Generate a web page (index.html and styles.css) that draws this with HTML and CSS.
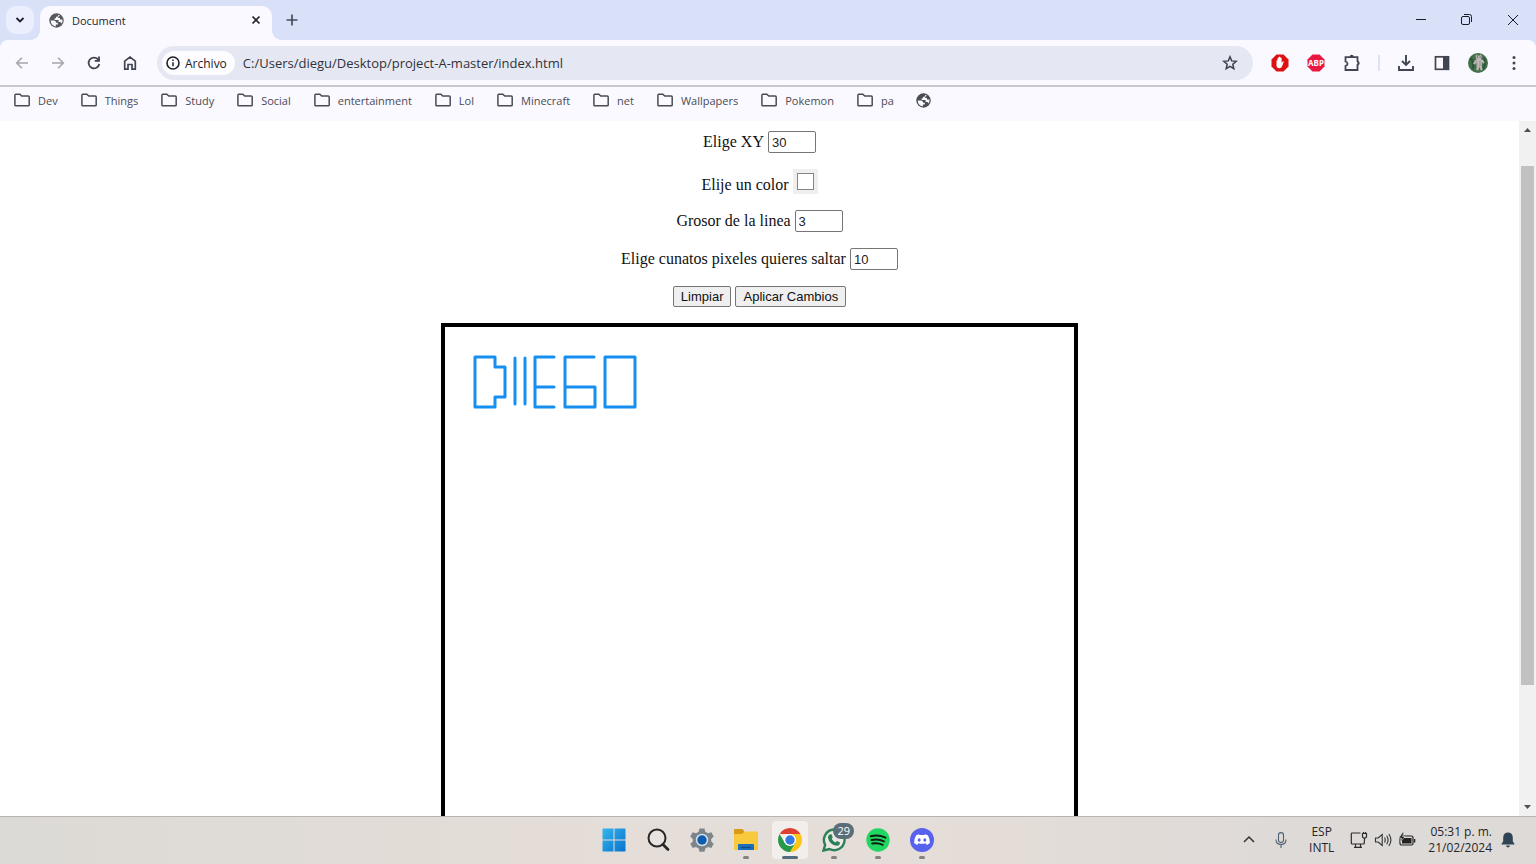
FILE: index.html
```html
<!DOCTYPE html>
<html lang="es">
<head>
<meta charset="utf-8">
<meta name="viewport" content="width=device-width, initial-scale=1">
<title>Document</title>
<link rel="stylesheet" href="styles.css">
</head>
<body>
<svg class="defs" aria-hidden="true">
  <symbol id="globe" viewBox="0 0 16 16"><circle cx="8" cy="8" r="7.700" fill="currentColor"/><path d="M9.500 1.800q.8 1.200-.3 2.200H7.500v1.700H6v1.800h4.200v2.200h1.700q1 .2 1.300 1.500 1.600-1.800 1.200-4.200h-2.700V5.300H9.800V4l2-1zM1.800 8h3.800q1.800.4 2 2.500h1.800v1.800H7.300v2q-5.300-.8-5.500-6.300z" fill="#faf9ff"/></symbol>
  <symbol id="folder" viewBox="0 0 18 16"><path d="M1.900 13V3.200q0-.9.9-.9h4.100l1.800 1.800h6.500q1 0 1 1v7.800q0 .9-1 .9H2.800q-.9 0-.9-.8z" fill="none" stroke="currentColor" stroke-width="1.5"/></symbol>
</svg>

<header class="tabstrip">
  <button class="tab-search" aria-label="Buscar pestañas"><svg width="10" height="10" viewBox="0 0 10 10"><path d="m1.500 3 3.500 3.500L8.500 3" fill="none" stroke="currentColor" stroke-width="1.8"/></svg></button>
  <div class="tab">
    <svg class="tab-icon" width="15" height="15"><use href="#globe"/></svg>
    <span class="tab-title">Document</span>
    <button class="bare" aria-label="Cerrar pestaña"><svg width="16" height="16" viewBox="0 0 16 16"><path d="m4.500 4.500 7 7m0-7-7 7" stroke="currentColor" stroke-width="1.7"/></svg></button>
  </div>
  <button class="bare new-tab" aria-label="Nueva pestaña"><svg width="16" height="16" viewBox="0 0 16 16"><path d="M8 2.500v11M2.500 8h11" stroke="#474c5c" stroke-width="1.7"/></svg></button>
  <div class="window-controls">
    <button class="bare" aria-label="Minimizar"><svg width="12" height="12" viewBox="0 0 12 12"><path d="M1 5.500h10" stroke="currentColor"/></svg></button>
    <button class="bare" aria-label="Restaurar"><svg width="12" height="12" viewBox="0 0 12 12"><rect x=".5" y="2.500" width="8" height="8" rx="1.500" fill="none" stroke="currentColor"/><path d="M3 .5h5.500q2 0 2 2V8" fill="none" stroke="currentColor"/></svg></button>
    <button class="bare" aria-label="Cerrar"><svg width="12" height="12" viewBox="0 0 12 12"><path d="m1 1 10 10M11 1 1 11" stroke="currentColor"/></svg></button>
  </div>
</header>

<nav class="toolbar" aria-label="Navegación">
  <button class="tool dim" aria-label="Atrás"><svg width="16" height="16" viewBox="0 0 16 16"><path d="M14 8H3m5-5.300L2.700 8 8 13.300" fill="none" stroke="currentColor" stroke-width="1.6"/></svg></button>
  <button class="tool dim" aria-label="Adelante"><svg width="16" height="16" viewBox="0 0 16 16"><path d="M2 8h11M8 2.700 13.300 8 8 13.300" fill="none" stroke="currentColor" stroke-width="1.6"/></svg></button>
  <button class="tool" aria-label="Recargar"><svg width="16" height="16" viewBox="0 0 16 16"><path d="M13.300 9A5.400 5.400 0 1 1 12 4.300L13.200 5.500" fill="none" stroke="currentColor" stroke-width="1.8"/><path d="M13.900 1.600v5.200H8.700V5h3.400V1.600z" fill="currentColor"/></svg></button>
  <button class="tool" aria-label="Inicio"><svg width="16" height="16" viewBox="0 0 16 16"><path d="M2.700 6.200 8 2l5.300 4.200v8H10V9.500H6v4.700H2.700z" fill="none" stroke="currentColor" stroke-width="1.7"/></svg></button>
  <div class="omnibox">
    <button class="site-info"><svg width="14" height="14" viewBox="0 0 14 14"><circle cx="7" cy="7" r="6" fill="none" stroke="currentColor" stroke-width="1.6"/><path d="M7 6.300v4M7 3.500v1.500" stroke="currentColor" stroke-width="1.5"/></svg>Archivo</button>
    <input class="url" type="text" aria-label="Dirección" value="C:/Users/diegu/Desktop/project-A-master/index.html">
    <button class="bare" aria-label="Añadir a marcadores"><svg width="16" height="16" viewBox="0 0 16 16"><path d="m8 1.800 1.700 4.100 4.500.4-3.400 2.900 1 4.400L8 11.300l-3.800 2.300 1-4.400-3.400-2.900 4.500-.4z" fill="none" stroke="#3c404d" stroke-width="1.5"/></svg></button>
  </div>
  <button class="tool" aria-label="AdBlock"><svg width="18" height="18" viewBox="0 0 18 18"><path d="M5.500.5h7l5 5v7l-5 5h-7l-5-5v-7z" fill="#dc1212"/><path d="M5.500 6.500q.7-.7 1.100 0V4q.6-.9 1.300 0V3q.7-.9 1.400 0v1q.7-.9 1.300 0v5l1-1.500q.8-.5 1.200.3L11 12.500q-.7 1.800-2.500 1.800-3 0-3-3z" fill="#fff"/></svg></button>
  <button class="tool" aria-label="Adblock Plus"><svg width="18" height="18" viewBox="0 0 18 18"><path d="M5.500.5h7l5 5v7l-5 5h-7l-5-5v-7z" fill="#e81840"/><text class="abp" x="9" y="12" text-anchor="middle">ABP</text></svg></button>
  <button class="tool" aria-label="Extensiones"><svg width="18" height="18" viewBox="0 0 18 18"><path d="M2.500 3.200h12v4a1.700 2 0 0 1 0 3.600v5.200h-12v-4q2-.6 2-2.200t-2-2.300z" fill="none" stroke="currentColor" stroke-width="1.8"/><path d="M6.700 3a2 2.200 0 0 1 4 0zM14.800 7a2.200 2.200 0 0 1 0 4.300z" fill="currentColor"/></svg></button>
  <span class="divider"></span>
  <button class="tool" aria-label="Descargas"><svg width="18" height="18" viewBox="0 0 18 18"><path d="M9 1v9.500M5 7l4 4 4-4M2 12v4h14v-4" fill="none" stroke="currentColor" stroke-width="1.9"/></svg></button>
  <button class="tool" aria-label="Panel lateral"><svg width="18" height="18" viewBox="0 0 18 18"><rect x="2.500" y="2.800" width="13" height="12.500" fill="none" stroke="currentColor" stroke-width="1.7"/><path d="M10 3h5.500v12H10z" fill="currentColor"/></svg></button>
  <button class="tool" aria-label="Perfil"><svg width="20" height="20" viewBox="0 0 20 20"><circle cx="10" cy="10" r="10" fill="#42704a"/><path d="M2.500 5Q6 9 5 16M16 5q2 6-1 11" fill="none" stroke="#2d5537" stroke-width="2"/><path d="m8 1 1 1.500h3L13 1l.8 3-.8 2.500 2.200.6 1.500 3-1.700.5-1-1.500-.2 4 .8 3.900-2 .5-1-4-1.300 4-2-.5.4-4-.6-3-1.500 1.500-1.600-.8L7 7.200l1.600-.7L7.500 4z" fill="#bdb8b6"/><circle cx="9.400" cy="4" r=".6" fill="#222"/><circle cx="12.100" cy="4" r=".6" fill="#222"/><path d="m8 8 1 5m3-5v5" stroke="#8b8983" stroke-width=".7"/></svg></button>
  <button class="tool" aria-label="Menú"><svg width="16" height="16" viewBox="0 0 16 16" fill="currentColor"><circle cx="8" cy="2.500" r="1.500"/><circle cx="8" cy="8" r="1.500"/><circle cx="8" cy="13.500" r="1.500"/></svg></button>
</nav>

<nav class="bookmarks" aria-label="Marcadores">
  <button><svg width="18" height="16"><use href="#folder"/></svg>Dev</button>
  <button><svg width="18" height="16"><use href="#folder"/></svg>Things</button>
  <button><svg width="18" height="16"><use href="#folder"/></svg>Study</button>
  <button><svg width="18" height="16"><use href="#folder"/></svg>Social</button>
  <button><svg width="18" height="16"><use href="#folder"/></svg>entertainment</button>
  <button><svg width="18" height="16"><use href="#folder"/></svg>Lol</button>
  <button><svg width="18" height="16"><use href="#folder"/></svg>Minecraft</button>
  <button><svg width="18" height="16"><use href="#folder"/></svg>net</button>
  <button><svg width="18" height="16"><use href="#folder"/></svg>Wallpapers</button>
  <button><svg width="18" height="16"><use href="#folder"/></svg>Pokemon</button>
  <button><svg width="18" height="16"><use href="#folder"/></svg>pa</button>
  <button aria-label="Página"><svg width="15" height="15"><use href="#globe"/></svg></button>
</nav>

<div class="viewport">
  <main class="page">
    <p><label for="xy">Elige XY</label> <input class="number" id="xy" type="number" value="30"></p>
    <p class="color-row"><label for="color">Elije un color</label> <input class="color" id="color" type="color" value="#ffffff"></p>
    <p><label for="grosor">Grosor de la linea</label> <input class="number" id="grosor" type="number" value="3"></p>
    <p><label for="salto">Elige cunatos pixeles quieres saltar</label> <input class="number" id="salto" type="number" value="10"></p>
    <p><button class="action">Limpiar</button> <button class="action">Aplicar Cambios</button></p>
    <svg class="canvas" width="629" height="629" role="img" aria-label="Dibujo">
      <g fill="none" stroke="#168ff0" stroke-width="3" stroke-linejoin="round" stroke-linecap="round">
        <path d="M30 30H50V40H60V70H50V80H30z"/>
        <path d="M70 31V77M80 31V77"/>
        <path d="M109 30H90V80H109M90 60H109"/>
        <path d="M149 30H120V80H150V60H120"/>
        <path d="M160 30H190V80H160z"/>
      </g>
    </svg>
  </main>
  <div class="scrollbar" aria-hidden="true">
    <svg width="17" height="17" viewBox="0 0 17 17"><path d="m5 11 3.500-4L12 11z" fill="#505050"/></svg>
    <div class="track"><div class="thumb"></div></div>
    <svg width="17" height="17" viewBox="0 0 17 17"><path d="m5 6 3.500 4L12 6z" fill="#505050"/></svg>
  </div>
</div>

<footer class="taskbar">
  <div class="apps">
    <button class="app" aria-label="Inicio"><svg width="24" height="24" viewBox="0 0 24 24"><defs><linearGradient id="win" x2="1" y2="1"><stop stop-color="#35b6ee"/><stop offset="1" stop-color="#0872cc"/></linearGradient></defs><path d="M1 .5h10.500V11.500H.5V1zM12.500.5H23l.5.5v10.500h-11zM.5 12.500h11v11H1l-.5-.5zM12.500 12.500h11V23l-.5.5H12.500z" fill="url(#win)"/></svg></button>
    <button class="app" aria-label="Buscar"><svg width="24" height="24" viewBox="0 0 24 24"><circle cx="11" cy="10" r="8.500" fill="#e9e3df" stroke="#282727" stroke-width="2"/><path d="m17 16.500 5 5" stroke="#282727" stroke-width="2.800" stroke-linecap="round"/></svg></button>
    <button class="app" aria-label="Configuración"><svg width="24" height="24" viewBox="0 0 24 24"><path d="M9.500.5h5l.8 3.300 2.700 1.500 3.300-1 2.400 4.200L21.200 11v2.500l2.500 2.200-2.400 4.200-3.300-1-2.700 1.600-.8 3.200h-5l-.8-3.200L6 18.900l-3.300 1L.3 15.700l2.500-2.200V11L.3 8.500l2.400-4.200 3.300 1 2.700-1.500z" fill="#7c858c"/><circle cx="12" cy="12" r="6.200" fill="#d9e1e8"/><circle cx="12" cy="12" r="4.700" fill="#0c5caf"/></svg></button>
    <button class="app open" aria-label="Explorador de archivos"><svg width="24" height="24" viewBox="0 0 24 24"><path d="M0 2q0-1 1-1h7.500l2 2.500L8 7H0z" fill="#d99a17"/><path d="M0 6h8l3-2.500h12q1 0 1 1V22H0z" fill="#f8c93d"/><path d="M4 22v-5q0-1 1-1h14q1 0 1 1v5z" fill="#1a70bf"/><path d="M7 19.500h10" stroke="#114a84" stroke-width="1.300"/></svg></button>
    <button class="app open active" aria-label="Google Chrome"><svg width="24" height="24" viewBox="0 0 24 24"><path d="M1.610 6A12 12 0 0 1 22.390 6H12z" fill="#df4032"/><path d="M22.390 6A12 12 0 0 1 12 24l5.200-9L12 6z" fill="#fbc518"/><path d="M12 24A12 12 0 0 1 1.610 6l5.190 9 10.400 0z" fill="#279847"/><circle cx="12" cy="12" r="6" fill="#fff"/><circle cx="12" cy="12" r="4.700" fill="#3479e1"/></svg></button>
    <button class="app open" aria-label="WhatsApp, 29 notificaciones"><svg width="24" height="24" viewBox="0 0 24 24"><path d="m1.500 22.500 1.700-5.700A10.300 10.300 0 1 1 7.500 21z" fill="#ece8e4" stroke="#2b8056" stroke-width="2.400"/><path d="M7.700 6.400 9.300 6l1.500 3.200-1.100 1.600q1.200 2.500 3.700 3.600l1.600-1.300 3 1.500q-.3 3.400-3.300 3.200-7.300-.9-8.800-8.300 0-2 1.800-3.100z" fill="#2b8056"/></svg><span class="badge">29</span></button>
    <button class="app open" aria-label="Spotify"><svg width="24" height="24" viewBox="0 0 24 24"><circle cx="12" cy="12" r="11.700" fill="#20d760"/><path d="M4.800 8.200q7.700-2 14.700 1.400M5.500 12q6.700-1.600 12.500 1.300M6.200 15.600q5.700-1.200 10.500 1.200" fill="none" stroke="#111b14" stroke-width="2" stroke-linecap="round"/></svg></button>
    <button class="app open" aria-label="Discord"><svg width="24" height="24" viewBox="0 0 24 24"><circle cx="12" cy="12" r="12" fill="#5661ee"/><path d="m8.500 6.200 1.200.9q2.300-.4 4.600 0l1.200-.9 2.500 1.200q2 3.500 1.900 7.500l-3 2-1.300-1.700q-3.600 1-7.200 0l-1.300 1.700-3-2q-.1-4 1.900-7.500z" fill="#fff"/><ellipse cx="9.200" cy="12" rx="1.500" ry="1.700" fill="#5661ee"/><ellipse cx="14.800" cy="12" rx="1.500" ry="1.700" fill="#5661ee"/></svg></button>
  </div>
  <div class="tray">
    <button class="bare" aria-label="Iconos ocultos"><svg width="16" height="16" viewBox="0 0 16 16"><path d="m3 10 5-5 5 5" fill="none" stroke="#333" stroke-width="1.500"/></svg></button>
    <button class="bare" aria-label="Micrófono"><svg width="16" height="16" viewBox="0 0 16 16"><rect x="5.500" y=".6" width="5" height="10" rx="2.500" fill="none" stroke="#4f6070" stroke-width="1.100"/><path d="M3 7.500q0 5 5 5t5-5M8 12.500V16" fill="none" stroke="#4f6070" stroke-width="1.100"/></svg></button>
    <button class="bare lang"><span>ESP</span><span>INTL</span></button>
    <button class="bare status" aria-label="Red, volumen y batería">
      <svg width="18" height="18" viewBox="0 0 18 18" fill="none" stroke="#2c2c2c" stroke-width="1.200"><path d="M10.500 2H2.300q-1 0-1 1v9q0 1 1 1h11q1 0 1-1V9.500M5.500 13v3M10.500 13v3M4 16.300h8M14.500 9.500V7"/><path d="M12.500 2.500h4V6l-1 1h-2l-1-1zM13.500 1v1.500M15.500 1v1.500"/></svg>
      <svg width="18" height="18" viewBox="0 0 18 18" fill="none" stroke="#333" stroke-width="1.100"><path d="M1.500 7v4h2.700l4 3.500v-11L4.200 7zM10.500 6.500q1.500 2.500 0 5M12.700 4.700q2.700 4.300 0 8.600M14.900 3q4 6 0 12"/></svg>
      <svg width="18" height="18" viewBox="0 0 18 18"><rect x="2" y="5" width="13" height="9" rx="1.500" fill="none" stroke="#222" stroke-width="1.200"/><path d="M4 7h9.500v5.500H4zM16 8h1.300v3.500H16z" fill="#222"/><path d="M4.500 1.500 1 7.200h2.500L2.500 11 7 5.500H4.500l1.500-4z" fill="#222" stroke="#dedad8" stroke-width=".6"/></svg>
    </button>
    <button class="bare clock"><span>05:31 p. m.</span><span>21/02/2024</span></button>
    <button class="bare" aria-label="Notificaciones"><svg width="16" height="16" viewBox="0 0 16 16"><path d="M8 .5q4.500 0 4.800 5v3.700l1.700 2.800v.5h-13V12l1.700-2.800V5.500Q3.500.500 8 .5zM6 13.500h4q-.5 2-2 2t-2-2z" fill="#2f4354"/></svg></button>
  </div>
</footer>
</body>
</html>
```

FILE: styles.css
```css
* { box-sizing: border-box; }

body {
  margin: 0;
  height: 100vh;
  display: flex;
  flex-direction: column;
  overflow: hidden;
  background: #fff;
  font-family: "Open Sans", "Noto Sans", sans-serif;
  font-size: 12px;
  color: #3b3d45;
}

button { font: inherit; color: inherit; }
svg { display: block; flex: none; }
.defs { position: absolute; width: 0; height: 0; }

.bare, .tool, .app, .bookmarks button {
  display: flex;
  align-items: center;
  justify-content: center;
  padding: 0;
  border: 0;
  background: none;
}

/* Tab strip; it extends 8px behind the toolbar's rounded corners */
.tabstrip {
  display: flex;
  align-items: center;
  flex: none;
  height: 48px;
  margin-bottom: -8px;
  padding: 0 0 8px 6px;
  background: #d9e1f9;
}
.tab-search {
  display: grid;
  place-items: center;
  width: 28px;
  height: 28px;
  padding: 0;
  border: 0;
  border-radius: 10px;
  background: #ebeffd;
  color: #1f1f27;
}
.tab {
  position: relative;
  display: flex;
  align-items: center;
  align-self: flex-end;
  width: 232px;
  height: 34px;
  margin-left: 6px;
  padding: 0 8px 6px 9px;
  border-radius: 10px 10px 0 0;
  background: #faf9ff;
  color: #24252b;
}
.tab::before, .tab::after {
  content: "";
  position: absolute;
  bottom: 0;
  width: 10px;
  height: 10px;
}
.tab::before { right: 100%; background: radial-gradient(circle at 0 0, transparent 10px, #faf9ff 10px); }
.tab::after { left: 100%; background: radial-gradient(circle at 100% 0, transparent 10px, #faf9ff 10px); }
.tab-icon { color: #55585f; }
.tab-title { flex: 1; margin-left: 8px; font-size: 11px; }
.new-tab { width: 40px; height: 40px; }
.window-controls { display: flex; margin-left: auto; color: #1c1c24; }
.window-controls .bare { width: 46px; height: 40px; }

/* Toolbar */
.toolbar {
  position: relative;
  display: flex;
  align-items: center;
  flex: none;
  height: 47px;
  padding: 1px 4px 0;
  border-bottom: 2px solid #c6c7cf;
  background: #faf9ff;
  border-radius: 8px 8px 0 0;
}
.tool { flex: none; width: 36px; height: 36px; color: #414552; }
.dim { color: #a5a6ae; }
.omnibox {
  display: flex;
  align-items: center;
  flex: 1;
  height: 34px;
  margin: 0 9px;
  padding: 0 15px 0 5px;
  border-radius: 17px;
  background: #e5e8f3;
}
.site-info {
  display: flex;
  align-items: center;
  gap: 5px;
  height: 24px;
  padding: 0 8px 0 4px;
  border: 0;
  border-radius: 12px;
  background: #fdfcff;
  color: #1f2025;
  font-weight: 500;
}
.url {
  flex: 1;
  min-width: 0;
  padding: 0;
  margin-left: 8px;
  border: 0;
  outline: 0;
  background: none;
  color: #303239;
  font-family: inherit;
  font-size: 13px;
}
.abp { font: bold 8px "Noto Sans", sans-serif; fill: #fff; }
.divider { flex: none; width: 2px; height: 16px; margin: 0 8px; background: #dde2f4; }

/* Bookmarks */
.bookmarks {
  display: flex;
  align-items: center;
  flex: none;
  gap: 22px;
  height: 34px;
  padding: 0 13px 8px;
  background: #faf9ff;
  color: #4a4c54;
  font-size: 11px;
}
.bookmarks button { gap: 7px; }

/* Page area */
.viewport { display: flex; flex: 1; min-height: 0; }
.page {
  display: flex;
  flex-direction: column;
  align-items: center;
  flex: 1;
  gap: 16px;
  min-width: 0;
  padding-top: 10px;
  overflow: hidden;
  color: #111;
  font-family: "Liberation Serif", "Times New Roman", serif;
  font-size: 16px;
}
.page p { display: flex; flex: none; align-items: center; gap: 4px; margin: 0; }
.page .color-row { align-items: flex-end; }
.number {
  appearance: textfield;
  width: 48px;
  height: 22px;
  padding: 1px 3px;
  border: 1px solid #767676;
  border-radius: 2px;
  background: #fff;
  color: #222;
  font: 13px "Liberation Sans", Arial, sans-serif;
}
.number::-webkit-inner-spin-button { display: none; }
.color {
  appearance: none;
  width: 25px;
  height: 25px;
  padding: 0;
  border: 0;
  background: #efefef;
}
.color::-webkit-color-swatch-wrapper { padding: 4px; }
.color::-webkit-color-swatch { border: 1px solid #858585; border-radius: 0; }
.action {
  height: 21px;
  padding: 0 7px;
  border: 1px solid #767676;
  border-radius: 2px;
  background: #efefef;
  color: #111;
  font: 13px "Liberation Sans", Arial, sans-serif;
}
.canvas { box-sizing: content-box; border: 4px solid #000; }

.scrollbar { display: flex; flex-direction: column; flex: none; width: 17px; background: #f1f1f1; }
.track { flex: 1; padding: 28px 2px 0; }
.thumb { height: 82%; background: #c1c1c1; }

/* Taskbar */
.taskbar {
  display: grid;
  grid-template-columns: 1fr auto 1fr;
  align-items: start;
  flex: none;
  height: 48px;
  border-top: 1px solid #b9b4b1;
  background: linear-gradient(90deg, #dcdad6, #e5ddd7 40%, #e5ddd7 60%, #dedad8 85%);
  color: #26262a;
}
.apps { grid-column: 2; display: flex; }
.app { position: relative; width: 44px; height: 46px; }
.open::after {
  content: "";
  position: absolute;
  bottom: 4px;
  width: 6px;
  height: 3px;
  border-radius: 2px;
  background: #858180;
}
.active::before {
  content: "";
  position: absolute;
  inset: 4px;
  border-radius: 4px;
  background: #f2eeeb;
}
.active svg { position: relative; }
.active::after { width: 16px; background: #526b7d; }
.badge {
  position: absolute;
  top: 6px;
  right: 2px;
  padding: 0 4px;
  border-radius: 8px;
  background: #5b6d79;
  color: #fff;
  font-size: 11px;
  line-height: 16px;
}
.tray {
  display: flex;
  align-items: center;
  justify-content: flex-end;
  height: 46px;
  padding-right: 20px;
}
.tray > .bare { margin-left: 16px; }
.lang, .clock { flex-direction: column; line-height: 16px; }
.tray > .lang { margin-left: 20px; }
.status { gap: 6px; }
.tray > .clock { align-items: flex-end; margin-left: 12px; }
.tray > .bare:last-child { margin-left: 8px; }
```
